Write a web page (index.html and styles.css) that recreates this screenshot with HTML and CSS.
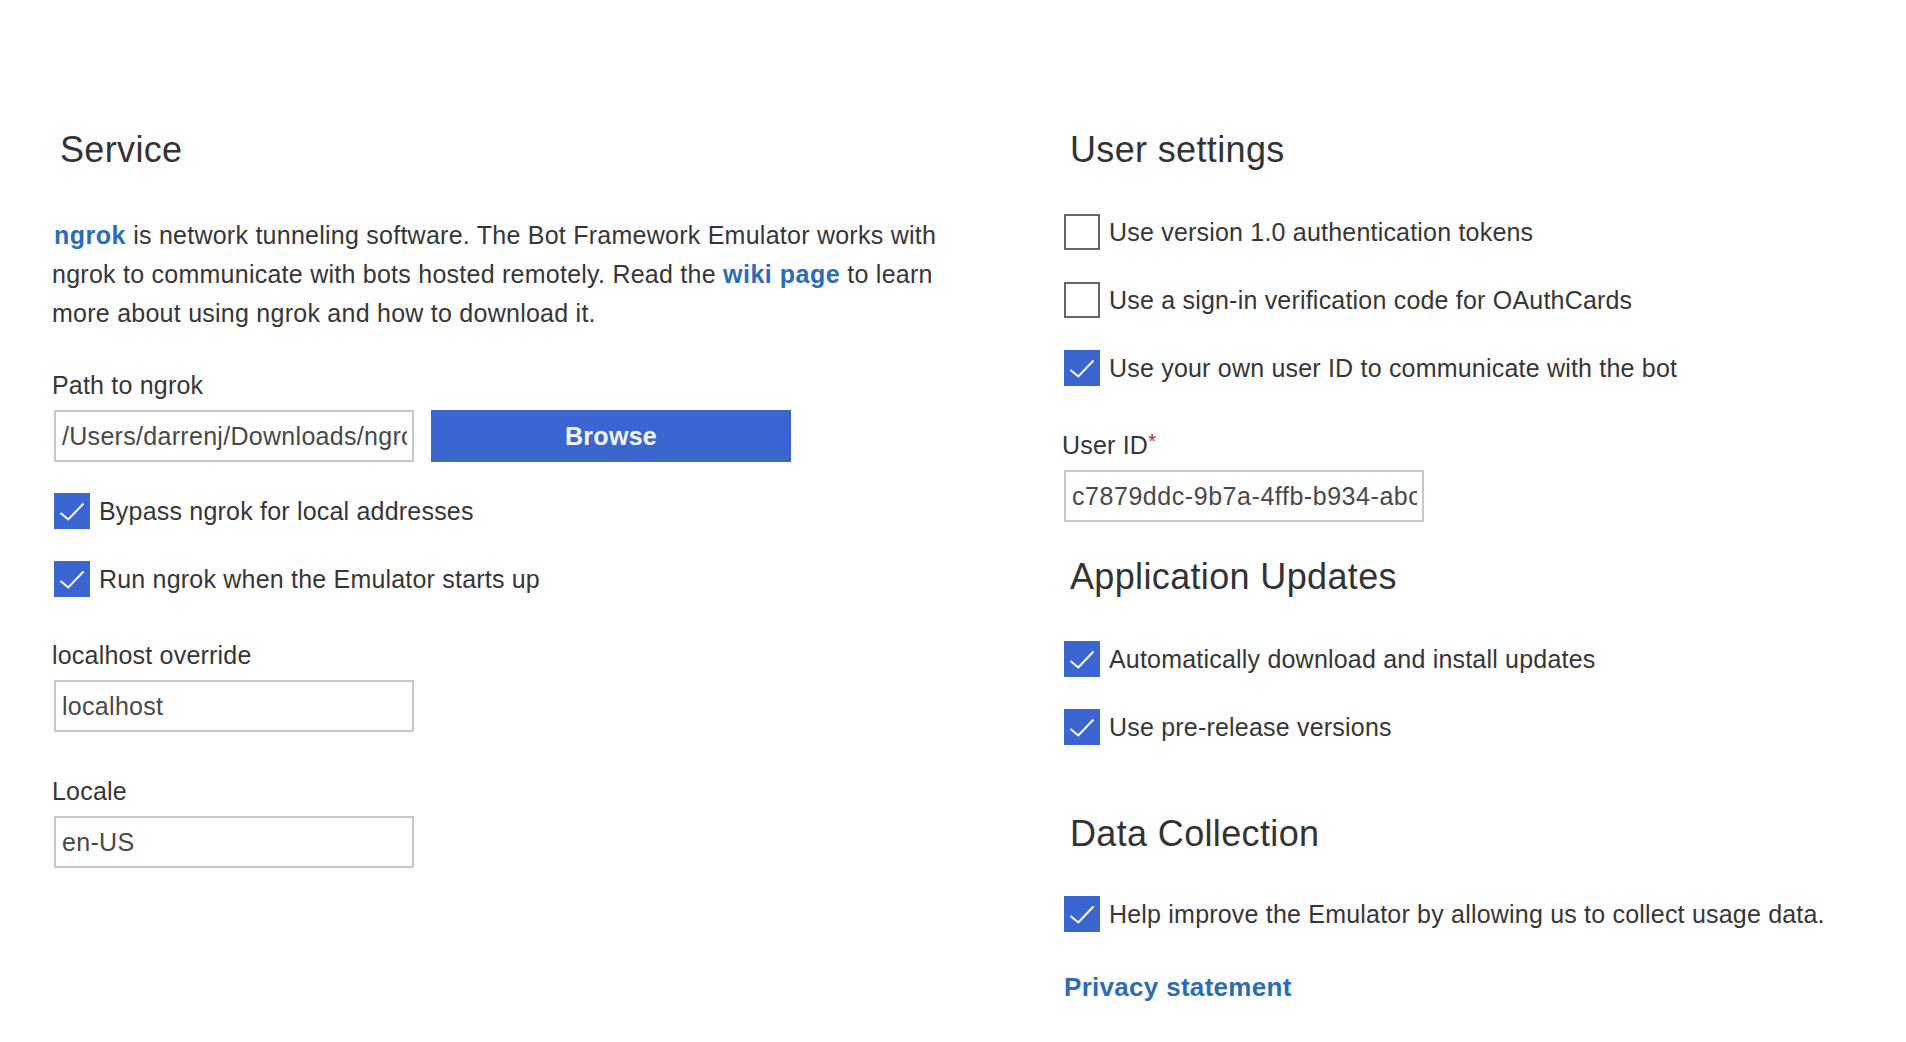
FILE: index.html
```html
<!DOCTYPE html>
<html lang="en">
<head>
<meta charset="utf-8">
<title>Settings</title>
<link rel="stylesheet" href="styles.css">
</head>
<body>
<div class="page">
  <section class="col">
    <h2 class="heading">Service</h2>
    <p class="intro"><a class="link first-link" href="#">ngrok</a> is network tunneling software. The Bot Framework Emulator works with ngrok to communicate with bots hosted remotely. Read the <a class="link" href="#">wiki page</a> to learn more about using ngrok and how to download it.</p>

    <div class="field first-field">
      <label class="label">Path to ngrok</label>
      <div class="input-row">
        <input class="text-input" type="text" value="/Users/darrenj/Downloads/ngrok">
        <button class="btn-primary" type="button">Browse</button>
      </div>
    </div>

    <div class="check-row after-input">
      <span class="box checked"><svg viewBox="0 0 36 36" width="36" height="36"><polyline points="6.5,20 14.3,26.5 29.5,10.5" fill="none" stroke="#fff" stroke-width="2"/></svg></span>
      <span class="check-label">Bypass ngrok for local addresses</span>
    </div>
    <div class="check-row">
      <span class="box checked"><svg viewBox="0 0 36 36" width="36" height="36"><polyline points="6.5,20 14.3,26.5 29.5,10.5" fill="none" stroke="#fff" stroke-width="2"/></svg></span>
      <span class="check-label">Run ngrok when the Emulator starts up</span>
    </div>

    <div class="field">
      <label class="label">localhost override</label>
      <input class="text-input" type="text" value="localhost">
    </div>

    <div class="field locale-field">
      <label class="label">Locale</label>
      <input class="text-input" type="text" value="en-US">
    </div>
  </section>

  <section class="col">
    <h2 class="heading">User settings</h2>
    <div class="check-row after-heading">
      <span class="box"></span>
      <span class="check-label">Use version 1.0 authentication tokens</span>
    </div>
    <div class="check-row">
      <span class="box"></span>
      <span class="check-label">Use a sign-in verification code for OAuthCards</span>
    </div>
    <div class="check-row">
      <span class="box checked"><svg viewBox="0 0 36 36" width="36" height="36"><polyline points="6.5,20 14.3,26.5 29.5,10.5" fill="none" stroke="#fff" stroke-width="2"/></svg></span>
      <span class="check-label">Use your own user ID to communicate with the bot</span>
    </div>

    <div class="field userid-field">
      <label class="label">User ID<span class="req">*</span></label>
      <input class="text-input id-input" type="text" value="c7879ddc-9b7a-4ffb-b934-abc4d2e1f0a9">
    </div>

    <h2 class="heading sub-heading">Application Updates</h2>
    <div class="check-row after-heading">
      <span class="box checked"><svg viewBox="0 0 36 36" width="36" height="36"><polyline points="6.5,20 14.3,26.5 29.5,10.5" fill="none" stroke="#fff" stroke-width="2"/></svg></span>
      <span class="check-label">Automatically download and install updates</span>
    </div>
    <div class="check-row">
      <span class="box checked"><svg viewBox="0 0 36 36" width="36" height="36"><polyline points="6.5,20 14.3,26.5 29.5,10.5" fill="none" stroke="#fff" stroke-width="2"/></svg></span>
      <span class="check-label">Use pre-release versions</span>
    </div>

    <h2 class="heading data-heading">Data Collection</h2>
    <div class="check-row after-heading-2">
      <span class="box checked"><svg viewBox="0 0 36 36" width="36" height="36"><polyline points="6.5,20 14.3,26.5 29.5,10.5" fill="none" stroke="#fff" stroke-width="2"/></svg></span>
      <span class="check-label">Help improve the Emulator by allowing us to collect usage data.</span>
    </div>
    <a class="link privacy" href="#">Privacy statement</a>
  </section>
</div>
</body>
</html>
```

FILE: styles.css
```css
html, body {
  margin: 0;
  padding: 0;
  background: #ffffff;
}

body {
  font-family: "Liberation Sans", Arial, Helvetica, sans-serif;
  font-size: 25px;
  letter-spacing: 0.2px;
  color: #363636;
}

.page {
  display: grid;
  grid-template-columns: 1010px 1fr;
  padding: 128px 0 0 52px;
  box-sizing: border-box;
  min-height: 1042px;
}

.col {
  display: flex;
  flex-direction: column;
  align-items: flex-start;
}

.heading {
  margin: 0;
  padding-left: 8px;
  font-size: 36px;
  font-weight: normal;
  letter-spacing: 0.35px;
  line-height: 44px;
  color: #333333;
}

.sub-heading {
  margin-top: 33px;
}

.data-heading {
  margin-top: 67px;
}

.intro {
  margin: 44px 0 0 0;
  width: 920px;
  line-height: 39px;
  letter-spacing: 0.25px;
  color: #363636;
}

.link {
  color: #2b6cb5;
  font-weight: bold;
  letter-spacing: 0.5px;
  text-decoration: none;
}

.first-link {
  margin-left: 2px;
}

.field {
  display: flex;
  flex-direction: column;
  align-items: flex-start;
  margin-top: 43px;
}

.first-field {
  margin-top: 37px;
}

.locale-field {
  margin-top: 44px;
}

.userid-field {
  margin-top: 40px;
}

.label {
  line-height: 30px;
  margin-bottom: 10px;
  color: #363636;
}

.req {
  color: #b3261e;
  font-size: 20px;
  vertical-align: 6px;
}

.input-row {
  display: flex;
  align-items: stretch;
  gap: 17px;
  margin-left: 2px;
}

.text-input {
  box-sizing: border-box;
  width: 360px;
  height: 52px;
  margin: 0;
  padding: 0 5px 0 6px;
  border: 2px solid #c8c8c8;
  border-radius: 0;
  font-family: "Liberation Sans", Arial, Helvetica, sans-serif;
  font-size: 25px;
  letter-spacing: 0.3px;
  color: #484848;
  background: #ffffff;
  outline: none;
}

.id-input {
  letter-spacing: 0.55px;
}

.field > .text-input {
  margin-left: 2px;
}

.btn-primary {
  width: 360px;
  height: 52px;
  margin: 0;
  border: none;
  border-radius: 0;
  background: #3b66d1;
  color: #f4f6fb;
  font-family: "Liberation Sans", Arial, Helvetica, sans-serif;
  font-size: 25px;
  font-weight: bold;
  letter-spacing: 0.3px;
  cursor: pointer;
}

.check-row {
  display: flex;
  align-items: center;
  gap: 9px;
  margin-top: 32px;
  margin-left: 2px;
  height: 36px;
}

.after-input {
  margin-top: 31px;
}

.after-heading {
  margin-top: 42px;
}

.after-heading-2 {
  margin-top: 40px;
}

.box {
  box-sizing: border-box;
  width: 36px;
  height: 36px;
  flex: 0 0 36px;
  border: 2px solid #666666;
  background: #ffffff;
  display: block;
}

.box.checked {
  border: none;
  background: #3b66d1;
}

.box svg {
  display: block;
}

.check-label {
  line-height: 36px;
  color: #363636;
  white-space: nowrap;
}

.privacy {
  margin-top: 40px;
  margin-left: 2px;
  line-height: 30px;
  font-size: 26px;
  letter-spacing: 0.3px;
}
```
